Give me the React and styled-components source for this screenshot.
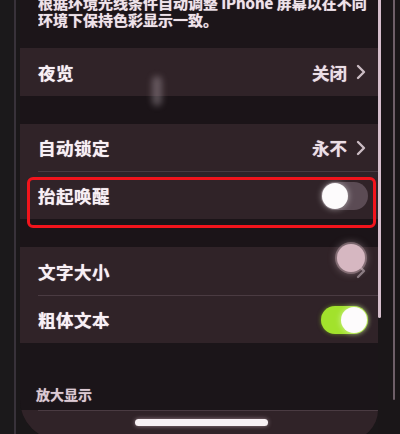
import React from "react";
import styled, { createGlobalStyle } from "styled-components";

const Global = createGlobalStyle`
  html, body { margin: 0; padding: 0; background: #171416; }
  #root { width: 400px; height: 434px; overflow: hidden; }
  * { box-sizing: border-box; }
`;

const Frame = styled.div`
  position: relative;
  display: flex;
  width: 400px;
  height: 434px;
  overflow: hidden;
  background: #1a1719;
  font-family: "Noto Sans CJK SC", "Noto Sans", sans-serif;
`;

const LeftBezel = styled.div`
  flex: 0 0 16px;
  background: #1b191b;
  border-right: 2px solid #38323a;
`;

const Screen = styled.div`
  flex: 0 0 358px;
  margin-left: 4px;
  height: 440px;
  display: flex;
  flex-direction: column;
  background: #1b1418;
  border-bottom-left-radius: 40px;
  border-bottom-right-radius: 30px;
  overflow: hidden;
`;

const RightBezel = styled.div`
  position: relative;
  flex: 1;
  display: flex;
  background: #1a1618;
`;

const ScrollIndicator = styled.div`
  flex: 0 0 3px;
  height: 318px;
  border-radius: 0 0 2px 2px;
  background: #d6bfcc;
`;

const BezelLine = styled.div`
  flex: 0 0 2px;
  margin-left: 12px;
  height: 400px;
  background: #6e5f68;
  border-radius: 0 0 2px 2px;
`;

const Footer = styled.div`
  margin-top: -6px;
  padding: 0 10px 20px 18px;
  color: #efe3ea;
  font-size: 15px;
  font-weight: 700;
  line-height: 17px;
  white-space: nowrap;
  background: #1c1519;
  text-shadow: 0 0 1px rgba(255, 240, 248, 0.7);
`;

const FooterLine = styled.div`
  overflow: hidden;
`;

const Gap = styled.div`
  height: ${(p) => p.$h}px;
  background: #1b1418;
`;

const SectionHeader = styled.div`
  padding: 43px 18px 8px 16px;
  color: #dccad4;
  font-size: 14px;
  font-weight: 700;
  line-height: 16px;
  background: #1b1519;
  text-shadow: 0 0 1px rgba(240, 220, 230, 0.6);
`;

const Group = styled.div`
  display: flex;
  flex-direction: column;
  background: #302328;
`;

const Row = styled.div`
  display: flex;
  align-items: center;
  height: ${(p) => p.$h || 48}px;
  margin-left: 18px;
  padding-right: 12px;
  border-top: ${(p) => (p.$divider ? "1px solid #4a3b42" : "none")};
`;

const Title = styled.span`
  flex: 1;
  color: #f8f0f5;
  font-size: 17.5px;
  font-weight: 700;
  letter-spacing: 0.5px;
  text-shadow: 0 0 1px rgba(255, 245, 250, 0.8);
`;

const Value = styled.span`
  color: #ebdfe6;
  font-size: 17.5px;
  font-weight: 700;
  margin-right: 9px;
  text-shadow: 0 0 1px rgba(255, 240, 248, 0.7);
`;

const Chevron = ({ faint }) => (
  <svg width="10" height="16" viewBox="0 0 10 16" style={{ opacity: faint ? 0.55 : 1 }}>
    <path d="M2 2 L8 8 L2 14" fill="none" stroke="#cbbcc4" strokeWidth="2.4" strokeLinecap="round" strokeLinejoin="round" />
  </svg>
);

const Track = styled.div`
  position: relative;
  width: 47px;
  height: 28px;
  border-radius: 14px;
  margin-right: -2px;
  background: ${(p) => (p.$on ? "#a2e22c" : "#5b4b54")};
  box-shadow: ${(p) => (p.$on ? "0 0 4px rgba(160,230,40,0.5)" : "none")};
`;

const Knob = styled.div`
  position: absolute;
  top: 1px;
  left: ${(p) => (p.$on ? "20px" : "1px")};
  width: 26px;
  height: 26px;
  border-radius: 50%;
  background: #fdfbfc;
  box-shadow: 0 0 6px rgba(255, 255, 255, 0.55);
`;

const Toggle = ({ on }) => (
  <Track $on={on}>
    <Knob $on={on} />
  </Track>
);

const Highlight = styled.div`
  position: absolute;
  left: 27px;
  top: 177px;
  width: 349px;
  height: 51px;
  border: 3.5px solid #f2141c;
  border-radius: 6px;
`;

const TouchDot = styled.div`
  position: absolute;
  left: 337px;
  top: 244px;
  width: 28px;
  height: 28px;
  border-radius: 50%;
  background: #d6b7c1;
  box-shadow: 0 0 0 2px rgba(214, 183, 193, 0.35), 0 0 8px rgba(230, 200, 210, 0.6);
`;

const Glare = styled.div`
  position: absolute;
  left: 152px;
  top: 76px;
  width: 10px;
  height: 30px;
  border-radius: 5px;
  background: rgba(200, 185, 195, 0.35);
  filter: blur(3px);
`;

const HomeBar = styled.div`
  position: absolute;
  left: 135px;
  top: 419px;
  width: 133px;
  height: 7px;
  border-radius: 4px;
  background: #f7f1f4;
  box-shadow: 0 0 4px rgba(255, 230, 240, 0.5);
`;

export default function App() {
  return (
    <>
      <Global />
      <Frame>
        <LeftBezel />
        <Screen>
          <Footer>
            <FooterLine>根据环境光线条件自动调整 iPhone 屏幕以在不同</FooterLine>
            <FooterLine>环境下保持色彩显示一致。</FooterLine>
          </Footer>
          <Group>
            <Row>
              <Title>夜览</Title>
              <Value>关闭</Value>
              <Chevron />
            </Row>
          </Group>
          <Gap $h={30} />
          <Group>
            <Row $h={47}>
              <Title>自动锁定</Title>
              <Value>永不</Value>
              <Chevron />
            </Row>
            <Row $divider>
              <Title>抬起唤醒</Title>
              <Toggle on={false} />
            </Row>
          </Group>
          <Gap $h={30} />
          <Group>
            <Row>
              <Title>文字大小</Title>
              <Chevron faint />
            </Row>
            <Row $divider>
              <Title>粗体文本</Title>
              <Toggle on />
            </Row>
          </Group>
          <SectionHeader>放大显示</SectionHeader>
          <Group>
            <Row $divider $h={30} />
          </Group>
        </Screen>
        <RightBezel>
          <ScrollIndicator />
          <BezelLine />
        </RightBezel>
        <Glare />
        <Highlight />
        <TouchDot />
        <HomeBar />
      </Frame>
    </>
  );
}
